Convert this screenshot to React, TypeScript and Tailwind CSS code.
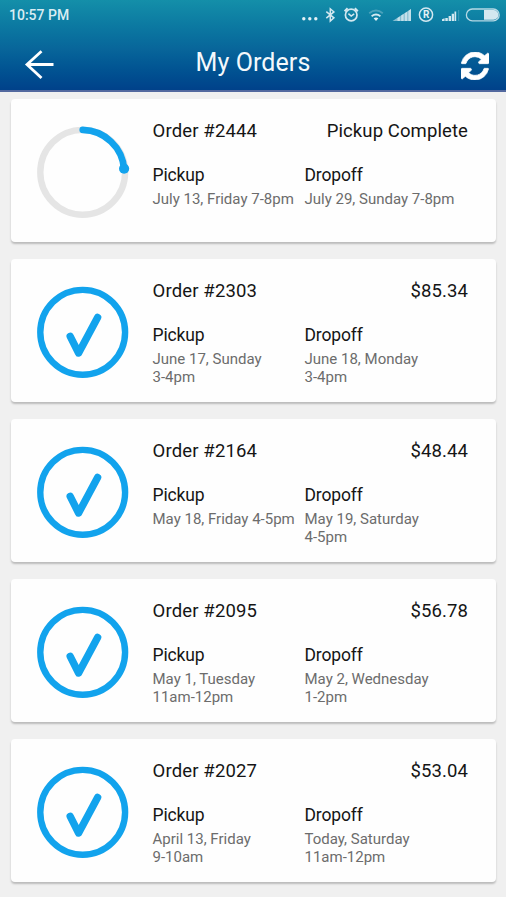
import React from "react";

type Slot = { day: string; time?: string };
type Order = {
  id: string;
  status: string;
  done: boolean;
  pickup: Slot;
  dropoff: Slot;
};

const orders: Order[] = [
  { id: "2444", status: "Pickup Complete", done: false, pickup: { day: "July 13, Friday 7-8pm" }, dropoff: { day: "July 29, Sunday 7-8pm" } },
  { id: "2303", status: "$85.34", done: true, pickup: { day: "June 17, Sunday", time: "3-4pm" }, dropoff: { day: "June 18, Monday", time: "3-4pm" } },
  { id: "2164", status: "$48.44", done: true, pickup: { day: "May 18, Friday 4-5pm" }, dropoff: { day: "May 19, Saturday", time: "4-5pm" } },
  { id: "2095", status: "$56.78", done: true, pickup: { day: "May 1, Tuesday", time: "11am-12pm" }, dropoff: { day: "May 2, Wednesday", time: "1-2pm" } },
  { id: "2027", status: "$53.04", done: true, pickup: { day: "April 13, Friday", time: "9-10am" }, dropoff: { day: "Today, Saturday", time: "11am-12pm" } },
];

function StatusIcons() {
  return (
    <svg width="206" height="30" viewBox="300 0 206 30" fill="none" stroke="#d3e8f0">
      <g fill="#e3f1f6" stroke="none">
        <circle cx="303.8" cy="18.8" r="1.7" />
        <circle cx="309.8" cy="18.8" r="1.7" />
        <circle cx="315.8" cy="18.8" r="1.7" />
      </g>
      <path d="M326.3 11.6l7.6 6.2-3.6 3.2V8.8l3.6 3.1-7.6 6.2" strokeWidth="1.5" />
      <circle cx="351.2" cy="15" r="5.8" strokeWidth="1.7" />
      <path d="M348.4 13.6l2.8 2.4 3-2.2" strokeWidth="1.5" />
      <path d="M344.6 11.2l3-3M357.8 11.2l-3-3" strokeWidth="2" />
      <path d="M369.2 13.2q6.8-5.4 13.6 0" strokeWidth="1.8" opacity=".3" />
      <path d="M371.6 16.2q4.4-3.4 8.8 0" strokeWidth="1.8" />
      <path d="M373.6 18.2q2.4-1.6 4.8 0l-2.4 2.8z" fill="#e3f1f6" stroke="none" />
      <g fill="#d3e8f0" stroke="none">
        <path d="M392.5 21L411 9v12z" opacity=".6" />
        <path d="M397.5 18l2.4-1.6V21h-2.4zM401.2 15.6l2.4-1.6v7h-2.4zM404.8 13.3l2.4-1.6V21h-2.4zM408.4 10.9L411 9v12h-2.6z" opacity=".8" />
        <path d="M442 21v-1.8l2.6-1V21zM445.3 18h2.5v3h-2.5zM448.6 16h2.4v5h-2.4zM451.7 13.7h2.3V21h-2.3zM454.5 11.5h1.7V21h-1.7z" />
        <path d="M458 10h1.2v11H458z" opacity=".22" />
        <path d="M484 10h9.5a4.8 4.8 0 0 1 0 9.8H484z" />
      </g>
      <circle cx="426" cy="14.7" r="6.6" strokeWidth="1.5" />
      <text x="426.1" y="18.3" textAnchor="middle" fill="#e3f1f6" stroke="none" className="font-[Roboto,sans-serif] text-[10px] font-bold">R</text>
      <rect x="466.4" y="9" width="32.8" height="11.8" rx="5.9" strokeWidth="1.3" opacity=".85" />
    </svg>
  );
}

function RefreshIcon() {
  return (
    <svg width="28" height="28" viewBox="0 128 1536 1536" fill="white" stroke="white" strokeWidth="40">
      <path transform="translate(0 128)" d="M1511 928q0 5-1 7-64 268-268 434.5t-478 166.5q-146 0-282.5-55t-243.5-157l-129 129q-19 19-45 19t-45-19-19-45v-448q0-26 19-45t45-19h448q26 0 45 19t19 45-19 45l-137 137q71 66 161 102t187 36q134 0 250-65t186-179q11-17 53-117 8-23 30-23h192q13 0 22.5 9.5t9.5 22.5zM1536 128v448q0 26-19 45t-45 19h-448q-26 0-45-19t-19-45 19-45l138-138q-148-137-349-137-134 0-250 65t-186 179q-11 17-53 117-8 23-30 23h-199q-13 0-22.5-9.5t-9.5-22.5v-7q65-268 270-434.5t480-166.5q146 0 284 55.5t245 156.5l130-129q19-19 45-19t45 19 19 45z" />
    </svg>
  );
}

function OrderMark({ done }: { done: boolean }) {
  return (
    <svg className="shrink-0" width="94" height="94" viewBox="0 0 94 94" fill="none" strokeLinecap="round" strokeLinejoin="round">
      <circle cx="46.7" cy="47.3" r="42.4" stroke={done ? "#12a3ed" : "#e5e5e5"} strokeWidth="6.4" />
      {done ? (
        <path d="M34.2 51.4L42.6 68L61.6 32.4" stroke="#12a3ed" strokeWidth="7.4" />
      ) : (
        <>
          <path d="M46.7 4.9A42.4 42.4 0 0 1 88.1 44.3" stroke="#12a3ed" strokeWidth="6.6" />
          <circle cx="88.1" cy="43.7" r="5.1" fill="#12a3ed" />
        </>
      )}
    </svg>
  );
}

function SlotInfo({ label, slot, className }: { label: string; slot: Slot; className: string }) {
  return (
    <div className={className}>
      <div className="text-[17.5px] leading-6 tracking-[-0.15px] text-[#151515]">{label}</div>
      <div className="mt-[3px] whitespace-nowrap text-[15px] leading-[18px] text-[#6c6c6c]">
        <div>{slot.day}</div>
        {slot.time && <div>{slot.time}</div>}
      </div>
    </div>
  );
}

function OrderCard({ order }: { order: Order }) {
  return (
    <article className="flex h-[143px] rounded-[4px] bg-[#fefefe] pl-[25px] pr-[28px] shadow-[0_2px_2px_rgba(0,0,0,0.22)]">
      <div className="pt-[26px]">
        <OrderMark done={order.done} />
      </div>
      <div className="ml-[22.5px] flex-1 pt-[20px]">
        <div className="flex justify-between text-[18.5px] leading-6 text-[#151515]">
          <h2 className="tracking-[0.15px]">Order #{order.id}</h2>
          <span className="tracking-[0.1px]">{order.status}</span>
        </div>
        <div className="mt-[20px] flex">
          <SlotInfo label="Pickup" slot={order.pickup} className="w-[152px]" />
          <SlotInfo label="Dropoff" slot={order.dropoff} className="" />
        </div>
      </div>
    </article>
  );
}

export default function App() {
  return (
    <div className="h-[900px] w-[506px] overflow-hidden bg-white font-[Roboto,sans-serif]">
      <header className="h-[92px] border-b-2 border-[#53699f] bg-linear-to-b from-[#148fa9] via-[#08659a] via-55% to-[#00418a]">
        <div className="flex h-[30px] justify-between">
          <span className="pl-[9px] text-[14px] font-medium leading-[30px] text-[#d9edf3]">10:57 PM</span>
          <StatusIcons />
        </div>
        <div className="grid h-[60px] grid-cols-[172px_1fr_45px] items-center">
          <svg className="ml-[24px] mt-[9px]" width="30" height="30" viewBox="0 0 30 30" fill="none" stroke="white" strokeWidth="2.8">
            <path d="M29.5 14.5H3M17.5 1.2L3 14.5L17.5 28" />
          </svg>
          <h1 className="pl-[23.5px] pt-[5px] text-[25px] leading-[30px] tracking-[0.1px] text-[#f4f9fc]">My Orders</h1>
          <div className="pt-[12px]">
            <RefreshIcon />
          </div>
        </div>
      </header>
      <main className="flex h-[805px] flex-col gap-[17.1px] bg-[#f0f0f0] pl-[11px] pr-[10px] pt-[7px]">
        {orders.map((order) => (
          <OrderCard key={order.id} order={order} />
        ))}
      </main>
    </div>
  );
}
